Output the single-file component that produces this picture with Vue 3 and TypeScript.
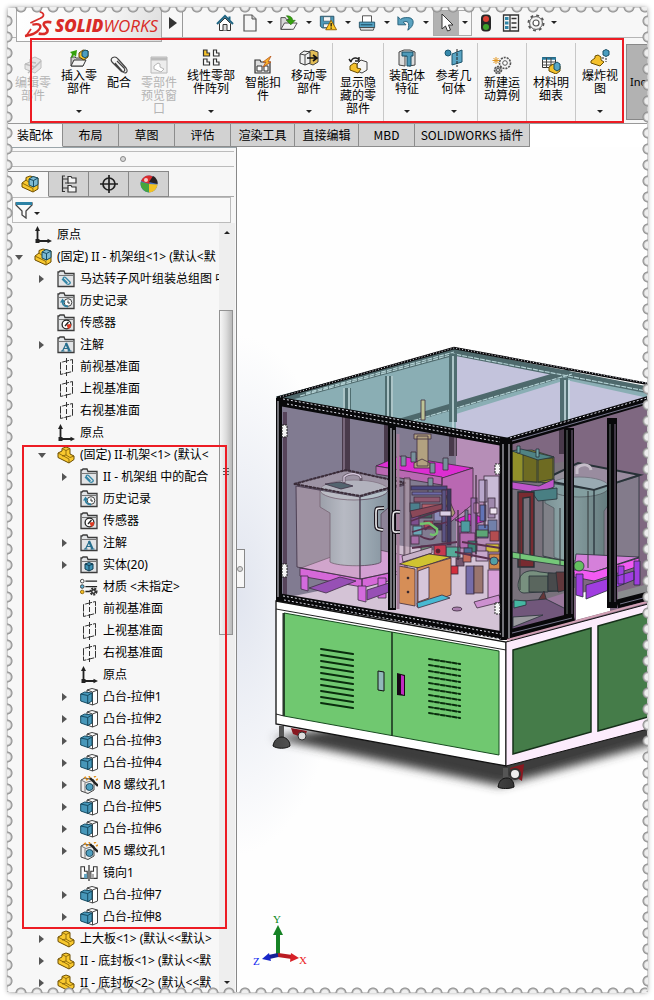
<script setup lang="ts">
interface RibbonItem {
  icon: string
  lines: string[]
  width: 'w-s' | 'w-m' | 'w-n' | 'w-l' | 'w-h' | 'w-x'
  menu?: boolean
  split?: boolean
  disabled?: boolean
}
interface TreeRow {
  level: 0 | 1 | 2
  icon: string
  text: string
  arrow?: 'open' | 'closed'
}

const ribbon: RibbonItem[] = [
  { icon: 'edit', lines: ['编辑零', '部件'], width: 'w-m', disabled: true },
  { icon: 'insert', lines: ['插入零', '部件'], width: 'w-m', menu: true },
  { icon: 'mate', lines: ['配合'], width: 'w-s' },
  { icon: 'preview', lines: ['零部件', '预览窗', '口'], width: 'w-m', disabled: true },
  { icon: 'pattern', lines: ['线性零部', '件阵列'], width: 'w-x', menu: true },
  { icon: 'fastener', lines: ['智能扣', '件'], width: 'w-m' },
  { icon: 'move', lines: ['移动零', '部件'], width: 'w-m', menu: true },
  { icon: 'showhide', lines: ['显示隐', '藏的零', '部件'], width: 'w-h', split: true },
  { icon: 'feature', lines: ['装配体', '特征'], width: 'w-n', menu: true, split: true },
  { icon: 'refgeo', lines: ['参考几', '何体'], width: 'w-n', menu: true },
  { icon: 'motion', lines: ['新建运', '动算例'], width: 'w-l', split: true },
  { icon: 'bom', lines: ['材料明', '细表'], width: 'w-l', split: true },
  { icon: 'explode', lines: ['爆炸视', '图'], width: 'w-l', menu: true, split: true },
]

const quick = [
  { icon: 'home', label: '主页', menu: false },
  { icon: 'new', label: '新建', menu: true },
  { icon: 'open', label: '打开', menu: true },
  { icon: 'save', label: '保存', menu: true },
  { icon: 'print', label: '打印', menu: true },
  { icon: 'undo', label: '撤销', menu: true },
]

const tabs = [
  { text: '装配体', cls: 't-first' },
  { text: '布局', cls: 't-short' },
  { text: '草图', cls: 't-short' },
  { text: '评估', cls: 't-short' },
  { text: '渲染工具', cls: 't-mid' },
  { text: '直接编辑', cls: 't-mid' },
  { text: 'MBD', cls: 't-short' },
  { text: 'SOLIDWORKS 插件', cls: 't-long' },
]

const boss = (n: number): TreeRow => ({ level: 2, icon: 'boss', text: `凸台-拉伸${n}`, arrow: 'closed' })

const tree: TreeRow[] = [
  { level: 0, icon: 'origin', text: '原点' },
  { level: 0, icon: 'assembly', text: '(固定) II - 机架组<1> (默认<默', arrow: 'open' },
  { level: 1, icon: 'f-mate', text: '马达转子风叶组装总组图 中', arrow: 'closed' },
  { level: 1, icon: 'f-history', text: '历史记录' },
  { level: 1, icon: 'f-sensor', text: '传感器' },
  { level: 1, icon: 'f-note', text: '注解', arrow: 'closed' },
  { level: 1, icon: 'plane', text: '前视基准面' },
  { level: 1, icon: 'plane', text: '上视基准面' },
  { level: 1, icon: 'plane', text: '右视基准面' },
  { level: 1, icon: 'origin', text: '原点' },
  { level: 1, icon: 'part', text: '(固定) II-机架<1> (默认<', arrow: 'open' },
  { level: 2, icon: 'f-mate', text: 'II - 机架组 中的配合', arrow: 'closed' },
  { level: 2, icon: 'f-history', text: '历史记录' },
  { level: 2, icon: 'f-sensor', text: '传感器' },
  { level: 2, icon: 'f-note', text: '注解', arrow: 'closed' },
  { level: 2, icon: 'f-solid', text: '实体(20)', arrow: 'closed' },
  { level: 2, icon: 'material', text: '材质 <未指定>' },
  { level: 2, icon: 'plane', text: '前视基准面' },
  { level: 2, icon: 'plane', text: '上视基准面' },
  { level: 2, icon: 'plane', text: '右视基准面' },
  { level: 2, icon: 'origin', text: '原点' },
  boss(1),
  boss(2),
  boss(3),
  boss(4),
  { level: 2, icon: 'hole', text: 'M8 螺纹孔1', arrow: 'closed' },
  boss(5),
  boss(6),
  { level: 2, icon: 'hole', text: 'M5 螺纹孔1', arrow: 'closed' },
  { level: 2, icon: 'mirror', text: '镜向1' },
  boss(7),
  boss(8),
  { level: 1, icon: 'part', text: '上大板<1> (默认<<默认>', arrow: 'closed' },
  { level: 1, icon: 'part', text: 'II - 底封板<1> (默认<<默', arrow: 'closed' },
  { level: 1, icon: 'part', text: 'II - 底封板<2> (默认<<默', arrow: 'closed' },
]

type Block = [number, number, number, number, string]
const machinery: Block[] = [
  [411, 486, 36, 4, '#4b4880'], [412, 492, 32, 3, '#6c6aa8'], [414, 497, 26, 5, '#8f5870'],
  [410, 503, 10, 8, '#4c7f8c'], [422, 504, 20, 6, '#b05f6a'], [411, 513, 8, 12, '#7d4f8e'],
  [420, 512, 12, 6, '#425f5c'], [434, 511, 8, 10, '#8d8db8'], [413, 526, 9, 9, '#6aa7b5'],
  [424, 521, 9, 8, '#a8445a'], [434, 523, 8, 7, '#3d3d50'], [442, 490, 4, 52, '#5a5484'],
  [447, 489, 4, 56, '#3d3960'], [411, 536, 8, 8, '#a76fa9'], [440, 511, 11, 5, '#dccfe5'],
  [484, 476, 15, 56, '#c9bad6'],
  [479, 480, 8, 22, '#b8a7cc'], [480, 505, 6, 16, '#6173b6'], [488, 498, 7, 20, '#9f88ad'],
  [488, 520, 9, 13, '#7180aa'], [465, 510, 3, 15, '#6b7d92'], [471, 498, 6, 41, '#9d6eae'],
  [461, 521, 9, 11, '#4e9ba0'], [478, 525, 10, 13, '#6278b4'], [490, 531, 9, 10, '#b34d50'],
  [460, 533, 15, 15, '#b46bb0'], [476, 530, 12, 7, '#5ca776'], [468, 541, 9, 11, '#3f8378'],
  [486, 544, 13, 8, '#d2ba3a'], [446, 547, 14, 10, '#55ab98'], [434, 545, 12, 11, '#c63a50'],
  [456, 558, 8, 8, '#74576e'], [476, 551, 12, 10, '#c6a7cb'], [489, 554, 11, 15, '#d18849'],
  [466, 566, 8, 28, '#766da9'], [474, 566, 9, 27, '#9a756e'], [488, 570, 12, 30, '#d79fd8'],
  [464, 548, 8, 9, '#4a6c94'], [450, 566, 8, 8, '#d22e3c'], [421, 546, 10, 8, '#6f8b79'],
  [474, 503, 5, 10, '#cf93c4'], [490, 508, 7, 6, '#efe6f2'], [463, 553, 8, 9, '#c36a5c'],
]
const vents = Array.from({ length: 10 }, (_, i) => i * 6)
</script>

<template>
  <div class="page">
    <svg class="sprites" aria-hidden="true">
      <symbol id="home" viewBox="0 0 18 18"><path d="M3.500 9.500v7h11v-7L9 4z" fill="#fff" stroke="#333" /><path d="M7 16.500v-6h4v6" fill="#ddd" stroke="#333" /><path d="M1 10 9 2l8 8M13.500 2.500v4" fill="none" stroke="#1f6482" stroke-width="2" /></symbol>
      <symbol id="new" viewBox="0 0 18 18"><path d="M3 1h8l4 4v12H3z" fill="#f6f6f6" stroke="#555" stroke-width="1.200" /><path d="M11 1v4h4" fill="#ccc" stroke="#555" /></symbol>
      <symbol id="open" viewBox="0 0 20 18"><path d="M1 16V3h5l1 2h5v11z" fill="#d8d8d8" stroke="#444" /><path d="M1 16 5 9h14l-4 7z" fill="#f3f3f3" stroke="#444" /><path d="M7 1c5 0 7 2 7 5h3l-5 5-5-5h3c0-2-1-3-3-5z" fill="#35a10e" stroke="#176000" stroke-width=".6" /></symbol>
      <symbol id="save" viewBox="0 0 20 18"><path d="M1.500 1.500h15v13h-13l-2-2z" fill="#4d99b8" stroke="#224b60" /><path d="M5 2h8v5H5zM5 10h7v4H5z" fill="#f5f5f5" stroke="#224b60" stroke-width=".7" /><path d="m13.500 6 6 10.500h-12z" fill="#ffca28" stroke="#8a5a00" /><path d="M13.500 9v4M13.500 14v1.500" stroke="#111" stroke-width="1.400" /></symbol>
      <symbol id="print" viewBox="0 0 20 18"><path d="M5 8V1h10v7" fill="#fff" stroke="#444" /><path d="M1.500 8h17v6h-17z" fill="#55a3c4" stroke="#1d4d63" /><path d="M2 14h16l-1 3H3z" fill="#ddd" stroke="#444" /><path d="M3 11h13" stroke="#123c50" /></symbol>
      <symbol id="undo" viewBox="0 0 20 18"><path d="M1 2v9h9L7 8c4-2 8 0 5 9 8-5 8-14 0-14-3 0-6 0-8 2z" fill="#5aa2c0" stroke="#1e5a75" /></symbol>
      <symbol id="cursor" viewBox="0 0 18 18"><path d="M4 0v15l3.500-3 2 5 3-1-2-5H15z" fill="#fff" stroke="#333" /></symbol>
      <symbol id="traffic" viewBox="0 0 12 18"><rect x="1" y=".5" width="10" height="17" rx="4" fill="#272727" /><circle cx="6" cy="5" r="3" fill="#db4034" /><circle cx="6" cy="13" r="3" fill="#3fa22c" /></symbol>
      <symbol id="list" viewBox="0 0 18 18"><path d="M1.500 1h15v16h-15zM8 1v16" fill="#f7f7f7" stroke="#333" stroke-width="1.300" /><path d="M3 3h3.500v3H3zM3 7.500h3.500v3H3zM3 12h3.500v3H3z" fill="#2f86a8" /><path d="M9.500 4.500h5M9.500 9h5M9.500 13.500h5" stroke="#333" stroke-width="1.300" /></symbol>
      <symbol id="gear" viewBox="0 0 18 18"><circle cx="9" cy="9" r="7.600" fill="none" stroke="#555" stroke-width="1.800" stroke-dasharray="2.900 3.070" /><circle cx="9" cy="9" r="6.400" fill="#f5f5f5" stroke="#555" /><circle cx="9" cy="9" r="3" fill="#fff" stroke="#555" stroke-width="1.200" /></symbol>

      <symbol id="part" viewBox="0 0 18 18"><path d="m1 7 4-2V2.500L9 1l4 1.500V8l4 2v3.500L12 17 1 11.500z" fill="#f9c92f" stroke="#6b4c00" /><path d="m5 2.500 4 2V9l4 2.500 4-1.500M9 4.500l4-2M1 7l11 6v4M9 9l-4 1" fill="none" stroke="#7b5a06" stroke-width=".8" /></symbol>
      <symbol id="assembly" viewBox="0 0 18 18"><path d="M1 8 5 5V2.500L9 1l8 2v11l-5 3L1 12z" fill="#f9c92f" stroke="#6b4c00" /><path d="M1 8l11 5.500V17M5 5l4 3" fill="none" stroke="#8e6908" /><path d="m8 4 4-2.500L17 3v6.500L12.500 12 8 10z" fill="#7dbad3" stroke="#174c64" /><path d="m8 4 4.500 1.500L17 3M12.500 5.500V12" fill="none" stroke="#174c64" /></symbol>
      <symbol id="origin" viewBox="0 0 18 18"><path d="M3.500 3v12H15" fill="none" stroke="#222" stroke-width="1.800" /><path d="M3.500 0 6 5H1zM18 15l-4.500-2.200v4.400z" fill="#222" /><rect x="1.500" y="13" width="4" height="4" fill="#222" /></symbol>
      <symbol id="plane" viewBox="0 0 18 18"><path d="M3.500 4.500v12l12-3v-12z" fill="none" stroke="#333" stroke-dasharray="7 1" /><path d="M9.500 0v18" stroke="#333" stroke-dasharray="5 2" /></symbol>
      <symbol id="folder" viewBox="0 0 18 18"><path d="M1 16.500V2h1l1-1h4l1 2.500h9v13z" fill="#e2e4e6" stroke="#3c3c3c" stroke-width="1.300" /><path d="M2 5.500h14" stroke="#777" /></symbol>
      <symbol id="f-mate" viewBox="0 0 18 18"><use href="#folder" /><path d="m5 9 5 5c2 1 4-1 3-2L8.500 7.500c-1-1-3 0-2 1.500l4 4" fill="none" stroke="#3587a7" stroke-width="1.300" /></symbol>
      <symbol id="f-history" viewBox="0 0 18 18"><use href="#folder" /><circle cx="11" cy="10.500" r="3.800" fill="#fff" stroke="#444" /><path d="M11 8.500V11h2" fill="none" stroke="#333" /><path d="M11 14.500c-5 0-6-3-5-6" fill="none" stroke="#2c7f9f" stroke-width="1.800" /><path d="m3 10.500 2.500-4 3 4z" fill="#2c7f9f" /></symbol>
      <symbol id="f-sensor" viewBox="0 0 18 18"><use href="#folder" /><circle cx="9.500" cy="10.500" r="4.400" fill="#fff" stroke="#222" stroke-width="1.300" /><path d="M9.500 10.500 14 10v3l-3 2z" fill="#dc3b24" /><path d="m8 12 3.500-4" stroke="#222" stroke-width="1.400" /></symbol>
      <symbol id="f-note" viewBox="0 0 18 18"><use href="#folder" /><path d="m5.500 15 4-8" fill="none" stroke="#286f8e" stroke-width="1.200" /><path d="m9 7 3.500 8" fill="none" stroke="#286f8e" stroke-width="2.200" /><path d="M6.500 12.500H12M4 15h3.500M10.500 15h4" fill="none" stroke="#286f8e" /></symbol>
      <symbol id="f-solid" viewBox="0 0 18 18"><use href="#folder" /><path d="m5 8 4-1.500L13 8v5l-4 2-4-2z" fill="#3f93b5" stroke="#113d52" /><path d="m5 8 4 1.500L13 8M9 9.500V15" fill="none" stroke="#113d52" /></symbol>
      <symbol id="material" viewBox="0 0 20 18"><path d="M6 2.500h13M6 8.500h13M6 14h5" stroke="#222" stroke-width="1.500" /><circle cx="2.500" cy="2.500" r="2" fill="#fff" stroke="#333" /><circle cx="2.500" cy="8.500" r="2" fill="#5fb5dd" stroke="#333" /><circle cx="2.500" cy="14.500" r="2" fill="#f4bd20" stroke="#8b6509" /><circle cx="15" cy="14" r="3" fill="none" stroke="#333" stroke-width="3" stroke-dasharray="2 .9" /><circle cx="15" cy="14" r="2" fill="none" stroke="#333" stroke-width="1.500" /></symbol>
      <symbol id="boss" viewBox="0 0 18 18"><path d="m7 2 5-1.500L17.500 2v13l-5 2L7 15z" fill="#fff" stroke="#444" /><path d="m7 2 5.500 2 5-2M12.500 4v13" fill="none" stroke="#444" /><path d="m.7 6 4-2L12 5v8l-4 2.500L.7 13z" fill="#4797b9" stroke="#164a61" /><path d="m.7 6 7 1.500L12 5M7.700 7.500v8" fill="none" stroke="#164a61" /></symbol>
      <symbol id="hole" viewBox="0 0 18 18"><path d="m1 4 4-2 9 2v10l-6 3.500L1 15z" fill="#efefef" stroke="#444" /><path d="m1 4 5 2.500L14 4M5 6.500v10" fill="none" stroke="#777" /><ellipse cx="9.500" cy="11" rx="3.500" ry="3.500" fill="#4e9fc0" stroke="#234f63" /><path d="m10 2 8 8" stroke="#222" stroke-width="2.400" /><path d="m4 2 2-1M9 0l1 2M14 1l2-1M6 4l2-1M16 4l2-1" stroke="#e3921d" stroke-width="1.600" /></symbol>
      <symbol id="mirror" viewBox="0 0 20 18"><path d="M1 2v13h7V7H5V2zM12 7v8h7V2h-4v5z" fill="#fff" stroke="#333" stroke-width="1.200" /><path d="M4.500 10H8v5H4.500z" fill="#62a5c2" /><path d="M12 10h3.500v5H12z" fill="#aaa" /><path d="M10 0v18" stroke="#111" stroke-width="1.200" /></symbol>
      <symbol id="cfg" viewBox="0 0 18 18"><path d="M5 1H2.500v15.500H5M5 8h4M3 4h6M3 13h6" fill="none" stroke="#333" stroke-width="1.200" /><path d="M8 1.500h3l1 1.500h4v5H8zM8 10.500h3l1 1.500h4v5H8z" fill="#f5f5f5" stroke="#333" stroke-width="1.200" /></symbol>
      <symbol id="target" viewBox="0 0 18 18"><circle cx="9" cy="9" r="6" fill="none" stroke="#222" stroke-width="1.700" /><path d="M9 0v18M0 9h18" stroke="#222" stroke-width="1.700" /></symbol>
      <symbol id="ball" viewBox="0 0 18 18"><circle cx="9" cy="9" r="8.500" fill="#4475c9" /><path d="M9 9 1 6C3 1 9-1 13 2z" fill="#db2d2d" /><path d="M9 9 .7 7c-1 5 3 10 8 10.500z" fill="#46a63b" /><path d="M9 9v8.500c5 0 8-4 8.500-8z" fill="#f2c122" /><path d="m9 7 4-6c4 2 5 6 4.500 8z" fill="#272020" /><circle cx="6" cy="5" r="2" fill="#fff" opacity=".75" /></symbol>

      <symbol id="edit" viewBox="0 0 20 18"><path d="m2 8 5-2V3l5-2 6 3v8l-6 5L2 13z" fill="#e5e5e5" stroke="#bcbcbc" /><path d="m2 8 10 3 6-6M7 6l6 1M5 17 16 7" fill="none" stroke="#bbb" stroke-width="1.500" /></symbol>
      <symbol id="insert" viewBox="0 0 20 18"><path d="M2 17V8h4l1 1h7v8z" fill="#ccc" stroke="#444" /><path d="m2 17 3-6h12l-3 6z" fill="#f4f4f4" stroke="#333" /><path d="m2 8 1-3-2-2 7-2-1 7-2-2-2 3z" fill="#35a10e" /><path d="m10 4 4-3 5 1v6l-4 3-5-3z" fill="#f2c12c" stroke="#604800" /><path d="m13 3 3-2 3 1v5l-3 2-3-2z" fill="#4c9dbf" stroke="#164b61" /></symbol>
      <symbol id="mate" viewBox="0 0 20 18"><path d="m6 7 7 8c3 4 7 1 4-3L9 3C6-1 0 2 3 6l9 9c2 2 5 0 3-3L8 5" fill="none" stroke="#444" stroke-width="1.200" /></symbol>
      <symbol id="preview" viewBox="0 0 20 18"><path d="M2 1h16v16H2z" fill="#ededed" stroke="#b8b8b8" /><path d="M2 3h16" stroke="#bbb" stroke-width="3" /><path d="m5 10 4-3 2 1v3l4 2-3 3-7-3z" fill="#fff" stroke="#b5b5b5" /></symbol>
      <symbol id="pattern" viewBox="0 0 20 18"><path d="M2.500 1v6h6V4H6V1z" fill="#f5c22c" stroke="#333" stroke-width="1.200" /><path d="M12.500 1v6h5.500V4h-2.500V1zM2.500 10v6h6v-3H6v-3zM12.500 10v6h5.500v-3h-2.500v-3z" fill="#fff" stroke="#333" stroke-width="1.200" /></symbol>
      <symbol id="fastener" viewBox="0 0 20 18"><path d="M2 17V4h5l1 2h9v11z" fill="#ddd" stroke="#333" stroke-width="1.200" /><path d="M4 10h5v5H4zM11 10h4v5h-4z" fill="#fff" stroke="#333" /><path d="m18 0-8 6h3l-3 5 8-5h-3z" fill="#f9b62c" stroke="#b6531c" stroke-width=".8" /></symbol>
      <symbol id="move" viewBox="0 0 20 18"><path d="m9 3 4-2 6 2v10l-5 3-5-2z" fill="#e2bd55" stroke="#444" /><path d="m1 5 4-3 6 1v11l-5 2-5-2z" fill="#f0f0f0" stroke="#333" /><path d="m1 5 5 1 5-3M6 6v10" fill="none" stroke="#444" /><path d="M8 9h9M14 6l4 3-4 3" fill="none" stroke="#111" stroke-width="1.600" /></symbol>
      <symbol id="showhide" viewBox="0 0 20 18"><path d="m9 8 4-4 6 2v8l-5 3-5-2z" fill="#f5f5f5" stroke="#444" /><path d="m2 10 4-3 3 1v4l4 1-3 4-8-3z" fill="#f4c12c" stroke="#684c00" /><path d="M3 6c1-5 7-5 8-2M11 1v4H7M3 6 1 3" fill="none" stroke="#222" stroke-width="1.400" /></symbol>
      <symbol id="feature" viewBox="0 0 20 18"><path d="m2 3 5-2h6l5 2v13l-6 1V7H8v10l-6-1z" fill="#ddd" stroke="#444" /><path d="M5 3h11v4h-2v10h-4V7H5z" fill="#4d99b9" stroke="#184d62" /></symbol>
      <symbol id="refgeo" viewBox="0 0 20 18"><circle cx="4" cy="4" r="3" fill="#3689ac" stroke="#1a5771" /><path d="M8 5v11l10-3V1z" fill="#5aa5c4" stroke="#1c536b" /><path d="M13 0v18" stroke="#222" stroke-dasharray="3 1" /></symbol>
      <symbol id="motion" viewBox="0 0 20 18"><circle cx="13" cy="7" r="5.500" fill="#f5f5f5" stroke="#555" stroke-width="1.600" stroke-dasharray="2 1" /><circle cx="13" cy="7" r="2.300" fill="#fff" stroke="#555" /><circle cx="6" cy="14" r="3.500" fill="#aaa" stroke="#555" stroke-width="1.600" stroke-dasharray="2 1" /><circle cx="6" cy="14" r="1.500" fill="#fff" stroke="#555" /><path d="M4 1v7M.5 4.500h7M1.500 2l5 5M6.500 2l-5 5" stroke="#e29722" /></symbol>
      <symbol id="bom" viewBox="0 0 20 18"><path d="M1.500 1.500h13v10h-13z" fill="#fff" stroke="#333" /><path d="M1 2.500h14" stroke="#287ca0" stroke-width="2.500" /><path d="M5.500 2v10M10 2v10M1 6h14M1 9h14" stroke="#444" /><path d="m8 11 4-3 7 2v5l-4 3-7-3z" fill="#f3c12c" stroke="#654b00" /><path d="m13 8 3-2 3 2v5l-3 2-3-2z" fill="#57a6c6" stroke="#184f65" /></symbol>
      <symbol id="explode" viewBox="0 0 20 18"><path d="m1 12 4-3V7l3-1 3 2v3l3 2-4 4-9-3z" fill="#f4c12c" stroke="#6a4e00" /><path d="m13 2 3-1.500L19 2v4l-3 1.500L13 6z" fill="#4a9dbf" stroke="#184f65" /><path d="M16 9v4M14 9h-3" stroke="#222" stroke-dasharray="2 1" /></symbol>
    </svg>

    <main class="sheet">
      <header class="titlebar">
        <div class="brand">
          <svg class="swoosh" viewBox="0 0 90 84" aria-hidden="true"><g fill="none" stroke="#d92b27"><path d="M50 2c14 4 16 13 2 20L22 36" stroke-width="5" /><path d="M28 41c24-5 29 3 20 15-9 13-25 16-42 19" stroke-width="7" /><path d="M24 54 8 77" stroke-width="5" /><path d="M85 34c-15-3-26 0-22 9 3 7 14 9 10 19-3 7-14 8-26 6" stroke-width="8" /></g></svg>
          <span class="brand-name"><b>SOLID</b><i>WORKS</i></span>
        </div>
        <button class="expand" aria-label="展开菜单"><span class="tri-right"></span></button>
        <nav class="quick" aria-label="快速访问">
          <span v-for="q in quick" :key="q.icon" class="q-item" :class="{ 'q-menu': q.menu }">
            <button :aria-label="q.label"><svg class="ico"><use :href="'#' + q.icon" /></svg></button>
            <button v-if="q.menu" class="q-drop" :aria-label="q.label + '菜单'"><span class="tri-down"></span></button>
          </span>
          <span class="select-tool">
            <button class="pressed" aria-label="选择"><svg class="ico"><use href="#cursor" /></svg></button>
            <button class="q-drop" aria-label="选择菜单"><span class="tri-down"></span></button>
          </span>
          <button class="q-plain" aria-label="重建"><svg class="ico"><use href="#traffic" /></svg></button>
          <button class="q-plain" aria-label="文件属性"><svg class="ico"><use href="#list" /></svg></button>
          <button class="q-plain" aria-label="选项"><svg class="ico"><use href="#gear" /></svg></button>
          <button class="q-drop" aria-label="选项菜单"><span class="tri-down"></span></button>
        </nav>
      </header>

      <section class="ribbon" aria-label="装配体工具">
        <button v-for="r in ribbon" :key="r.icon" class="tool" :class="[r.width, { split: r.split, menu: r.menu }]" :disabled="r.disabled">
          <svg class="tool-ico"><use :href="'#' + r.icon" /></svg>
          <span v-for="l in r.lines" :key="l" class="tool-line">{{ l }}</span>
          <span v-if="r.menu" class="tri-down tool-drop"></span>
        </button>
        <button class="instant">Inc</button>
        <div class="mark mark-ribbon"></div>
      </section>

      <nav class="tabs" aria-label="命令管理器">
        <button v-for="(t, i) in tabs" :key="t.text" :class="[t.cls, { active: i === 0 }]">{{ t.text }}</button>
      </nav>

      <div class="work">
        <aside class="panel">
          <div class="grip"><span class="dot"></span></div>
          <div class="panel-tabs">
            <button class="active" aria-label="设计树"><svg class="ico"><use href="#assembly" /></svg></button>
            <button aria-label="配置"><svg class="ico"><use href="#cfg" /></svg></button>
            <button aria-label="尺寸"><svg class="ico"><use href="#target" /></svg></button>
            <button aria-label="外观"><svg class="ico"><use href="#ball" /></svg></button>
          </div>
          <label class="filter">
            <svg class="funnel" viewBox="0 0 18 18"><path d="M1 2h16v2l-6 6v7l-4-3v-4L1 4z" fill="#fafafa" stroke="#444" stroke-width="1.300" /><path d="M1 2.500h16" stroke="#2d83a6" stroke-width="3" /></svg>
            <span class="tri-down"></span>
            <input type="text" aria-label="过滤" />
          </label>
          <div class="tree-area">
            <ul class="tree">
              <li v-for="(n, i) in tree" :key="i" :class="'lv' + n.level">
                <button v-if="n.arrow" class="twist" :aria-label="n.arrow === 'open' ? '折叠' : '展开'"><span :class="n.arrow"></span></button>
                <span v-else class="twist"></span>
                <svg class="node-ico"><use :href="'#' + n.icon" /></svg>
                <span class="node-text">{{ n.text }}</span>
              </li>
            </ul>
            <div class="scroll">
              <span class="tri-up"></span>
              <div class="track"><div class="thumb"><span></span></div></div>
              <span class="tri-down"></span>
            </div>
            <div class="mark mark-tree"></div>
          </div>
        </aside>

        <section class="viewport">
          <button class="handle" aria-label="折叠面板"><span class="dot"></span></button>
          <svg class="scene" viewBox="237 147 410 845" preserveAspectRatio="xMinYMin slice" role="img" aria-label="机架装配体模型">
            <defs>
              <filter id="soft" x="-10%" y="-40%" width="120%" height="180%"><feGaussianBlur stdDeviation="5" /></filter>
              <linearGradient id="tank" x1="0" x2="1"><stop offset="0" stop-color="#7e96a0" /><stop offset=".35" stop-color="#adc3cc" /><stop offset="1" stop-color="#788f99" /></linearGradient>
              <linearGradient id="tank2" x1="0" x2="1"><stop offset="0" stop-color="#6f8f92" /><stop offset=".3" stop-color="#91b0b2" /><stop offset="1" stop-color="#496769" /></linearGradient>
              <linearGradient id="foot" x1="0" x2="1"><stop offset="0" stop-color="#444" /><stop offset=".5" stop-color="#999" /><stop offset="1" stop-color="#333" /></linearGradient>
            </defs>
            <path d="M272 738 500 786 660 742v-30H430z" fill="#3d3d3d" filter="url(#soft)" />
            <path d="M300 726 506 776 660 730v-20H400z" fill="#3d3d3d" />

            <!-- top glass -->
            <path d="M277 398 454 350l194 38v12l-142 40z" fill="#8aaeb4" />
            <path d="M456 354 560 374 456 408zM456 414l110-34 82 18-142 40-50-9z" fill="#c3c3dc" />
            <!-- interior -->
            <path d="M282 402 506 440v196l-224-38z" fill="#817b91" />
            <path d="M456 434 502 442v190l-46-7z" fill="#b68eb7" />
            <path d="M396 545 502 560v76L284 598l98-20z" fill="#d4c3d6" />
            <path d="M512 438 647 400v208l-135 32z" fill="#7f6881" />
            <path d="M512 560 574 556v64l-62 18z" fill="#9a789c" />
            <path d="M576 594 610 587v24l-34 9z" fill="#fff" />
            <path d="M618 592 648 584v14l-30 6z" fill="#8a8c8e" />
            <path d="M512 470 574 460v130l-62 20z" fill="#79727c" />

            <!-- frame members behind the glass -->
            <g fill="none" stroke="#4e696c" stroke-width="7"><path d="M277 400 454 352l194 38M400 422l170-50" /></g>
            <g fill="none" stroke="#b3d1d4" stroke-width="1.200"><path d="M300 396 454 354l192 37M306 393 454 352M402 424l170-50" stroke-dasharray="5 1" /></g>
            <g fill="none" stroke="#4f6d70" stroke-width="8"><path d="M347 388v25M389 376v46M453 354v68M564 378v44" /></g>
            <g fill="none" stroke="#cae1e3" stroke-width="1.500"><path d="M344 388v25M349 388v25M388 376v46M392 376v46M453 356v72M565 380v44M569 380v40" /></g>
            <g fill="none" stroke="#493a4b" stroke-width="8"><path d="M346 414v58M388 424v48M453 434v22M563 424v30" /></g>
            <path d="M344 414v56M455 434v22" stroke="#87758a" stroke-width="1.500" />
            <path d="M285 412v184" stroke="#57445b" stroke-width="4" />

            <!-- left tank -->
            <g stroke="#3d2f43" stroke-width=".8">
              <path d="m301 568 60-22 46 10v16l-45 11z" fill="#d99fdb" />
              <path d="M300 568 362 579v8l-62-11zM362 579l30-7v8l-30 8z" fill="#d568d8" />
              <path d="M301 576h7v15l-7-2zM358 586h8v16l-8-2zM378 578h8v20h-8z" fill="#d36bdd" />
              <path d="M309 588 340 577l16 4-30 12zM367 590l22-7v9l-22 8z" fill="#9750b5" />
              <path d="M320 491h68v17l-7 6v48c-6 5-43 5-51 0v-49l-10-6z" fill="url(#tank)" />
              <ellipse cx="354" cy="490" rx="34" ry="10" fill="#b3c8cf" />
              <path d="m294 484 52-14 60 13-46 13z" fill="#b1a4b1" fill-opacity=".6" stroke-width="1.200" />
              <path d="M296 486 360 497v82l-63-12z" fill="#c5afb8" fill-opacity=".42" />
              <path d="m360 497 45-12v85l-45 9z" fill="#c0a4b6" fill-opacity=".2" />
              <path d="m325 484 15-2 13 4-12 3z" fill="#53646f" />
              <path d="M344 483v-6c5-5 16-4 17 1v3" fill="none" stroke="#685c6b" stroke-width="3" /><path d="M344 482v-5c5-5 16-4 17 1" fill="none" stroke="#d4c6db" stroke-width="1.400" />
            </g>
            <path d="m294 484 52-14 60 13-46 13z" fill="none" stroke="#3a2c38" stroke-width="2" stroke-dasharray="3 1" />

            <!-- press, plates and machinery -->
            <g stroke="#3c2c3d" stroke-width=".8">
              <path d="M376 466 399 456l74 12-30 10z" fill="#dc2ed2" />
              <path d="m376 466 66 11v8l-66-11zM442 478l31-10v36l-31 25z" fill="#b968b2" />
              <path d="m455 520 14-6 24 5-25 7z" fill="#dc26d5" /><path d="m459 526 9 1v22l-9-3z" fill="#a952a8" />
              <path d="M417 436h11v30h-11zM414 434h17v5h-17zM414 463l8-4 8 4v5h-16z" fill="#b2a180" />
              <path d="M421 400h4v20h-4z" fill="#bdc497" />
              <path d="M401 456h5v10h-5zM411 452h5v10h-5zM430 463h5v10h-5zM443 458h5v12h-5zM428 478h5v16h-5z" fill="#78919c" />
              <path d="M404 478h6v80h-6z" fill="#b9a0ae" fill-opacity=".6" />
              <path d="m447 495 8 18-3 4-7-14z" fill="#aa9975" />
              <rect v-for="(b, i) in machinery" :key="i" :x="b[0]" :y="b[1]" :width="b[2]" :height="b[3]" :fill="b[4]" />
              <path d="M476 475v79M485 480v48M458 510v50" fill="none" stroke-width="1.200" />
              <path d="m411 521 30-11M412 532l35-10M425 530c5-7 12-2 11 5-2 7-11 4-16 1M462 542l38 6M455 552l46 9M412 548l45-6" fill="none" stroke="#58304d" stroke-width="1.800" />
              <path d="m410 511 32-7v5l-30 9z" fill="#8b4858" />
              <path d="m420 524 9-1 8 6c1 6-3 7-7 5" fill="none" stroke="#73c36d" stroke-width="2.500" />
              <path d="m402 556 30-9v6l-29 9z" fill="#c8b2c9" />
              <path d="m399 564 30-10 22 3-32 11z" fill="#d0c331" />
              <path d="m399 566 16 3v37l-16-3zM417 568l34-10v37l-34 12z" fill="#d68e57" />
              <path d="m418 571 11-4v31l-11 4z" fill="#d6c6da" />
              <path d="m417 603 25-8 8 3-32 10z" fill="#47b9d2" />
              <path d="m474 602 25-7 2 7-24 6z" fill="#cc90cf" /><ellipse cx="457" cy="609" rx="5" ry="2" fill="#ab7faf" />
              <circle cx="438" cy="551" r="2" fill="#621b28" /><circle cx="494" cy="561" r="4" fill="#4f9fa5" /><circle cx="408" cy="578" r="1" /><circle cx="408" cy="592" r="1" />
            </g>

            <!-- right bay -->
            <g stroke="#273137" stroke-width=".8">
              <path d="M545 488h64v16l-5 7v46c-8 5-42 5-50 0v-49l-9-5z" fill="url(#tank2)" />
              <ellipse cx="579" cy="487" rx="30" ry="10" fill="#7fa4a6" />
              <path d="m543 480 35-17 62 12-46 15z" fill="#b3b0bd" fill-opacity=".5" stroke-width="2" />
              <path d="m543 482 51 8v78l-51-12zM594 490l45-14v82l-45 13z" fill="#8a9698" fill-opacity=".42" />
              <path d="M577 474v-6c5-5 13-4 14 2" fill="none" stroke="#c5bdc9" stroke-width="3" />
              <path d="m576 554 63 3-45 15-20-2z" fill="#d580da" />
              <path d="M574 570h9l11 2 45-14v8l-45 15-20-4z" fill="#f25af2" />
              <path d="M576 574h7v23l-7-2zM586 585l48-14v9l-48 19zM618 566h6v18h-6zM634 561h6v24h-6z" fill="#a03de0" />
              <path d="m512 451 20-1 22 7v26l-42-2z" fill="#91902a" /><path d="m523 455 14-1v28l-14-1zM538 458h15v21l-15 3z" fill="#6e6b22" />
              <path d="m512 451 9-2 33 8-16 3z" fill="#508384" /><path d="M517 446h3v7h-3zM536 449h3v8h-3z" fill="#6fa3a6" />
              <path d="m506 481 33 5 15-7v8l-16 6-31-5z" fill="#be55ca" />
              <path d="m531 491 26-3v11l-19 2z" fill="#497f83" />
              <path d="M518 492h16v75h-16zM523 498v60h7v-61z" fill="#782b31" fill-rule="evenodd" stroke-width="1.400" />
              <path d="m512 552 60 10v5l-60-9z" fill="#75c779" />
              <path d="M519 580c2-9 12-11 21-8l18 2v17l-34 2c-6 0-7-8-5-13z" fill="#78907f" /><path d="M529 576h19v16h-19z" fill="#5a665e" /><path d="M548 573h10v18h-10z" fill="#484a4c" /><path d="M556 572h18v16l-16 4z" fill="#60373b" />
              <path d="m532 610 12-19 5 18z" fill="#653638" /><circle cx="579" cy="566" r="5" fill="#64be60" />
              <path d="m512 602 34-3 28 14-50 17-12-1z" fill="#71577b" /><path d="m514 600 12 1v4l-12 3z" fill="#45b8a3" />
              <path d="m513 617 30-2-30 12z" fill="#9b9b9f" />
            </g>
            <path d="M520 520v70M560 508v57M588 491v77" stroke="#34383a" />

            <!-- black extrusions -->
            <g fill="none" stroke="#08080a">
              <path d="M277 401 506 442" stroke-width="9" /><path d="M506 442 648 400" stroke-width="8" />
              <path d="M277 597 506 636" stroke-width="8" /><path d="M506 635 574 617M617 604l31-8" stroke-width="9" />
              <path d="M279 398v204" stroke-width="6" /><path d="M392 424v186" stroke-width="8" /><path d="M506 440v200" stroke-width="13" />
              <path d="M569 428v192M612 418v190" stroke-width="10" />
              <path d="M277 398 454 348l194 36" stroke-width="2.500" />
            </g>
            <g fill="none" stroke="#dcdce6">
              <path d="M283 399 500 438M287 404l213 38M510 438l137-40M283 596l218 38M284 600l217 39" stroke-dasharray="2 2" />
              <path d="M512 441 648 402M512 633l60-15M620 604l27-7" stroke="#77778c" />
              <path d="M278 401v196M391 428v180M394 430v178M503 444v193M509 444v194" />
              <path d="M567 430v184M610 424v178" stroke="#66706f" /><path d="M572 430v184M615 424v178" stroke="#786781" />
              <path d="M280 397 454 348l192 35" stroke-dasharray="1 2" />
            </g>
            <path d="M398 434v175" stroke="#a37e99" stroke-width="3" />
            <g fill="#f4f4f4" stroke="#222"><path d="M282 425h5v12h-5zM282 564h5v13h-5zM495 464h5v10h-5zM495 603h5v11h-5z" stroke-dasharray="2 1" /></g>
            <g fill="none" stroke="#1d1720" stroke-width="4"><path d="M384 508c-9 0-8 0-8 8v8c0 6 2 5 7 6M400 512c-7-1-7 0-7 7v10c0 4 2 3 7 3" /></g>
            <g fill="none" stroke="#eee" stroke-width="1.600"><path d="M384 508c-9 0-8 0-8 8v8c0 6 2 5 7 6M400 512c-7-1-7 0-7 7v10c0 4 2 3 7 3" /></g>

            <!-- base cabinet -->
            <path d="M276 601 506 642v124l-230-42z" fill="#fff" stroke="#111" stroke-width="1.300" />
            <path d="m506 642 142-38v125l-142 37z" fill="#fcecfc" stroke="#111" />
            <path d="m507 640 140-38" stroke="#d2a0b4" stroke-width="2" />
            <path d="M284 613 499 651v104l-215-39z" fill="#70c870" stroke="#174c20" />
            <path d="M276 609 506 650M283 613v103M276 714l8 2" fill="none" stroke="#222" />
            <path d="M284 613v103M392 632v104" stroke="#1d3521" stroke-width="1.600" />
            <path d="M513 650 591 628v104l-78 22zM598 626l50-14v105l-50 14z" fill="#457c49" stroke="#152f19" stroke-width="1.500" />
            <g stroke="#092d0d" stroke-width="2" stroke-linecap="round">
              <path v-for="v in vents" :key="'a' + v" :d="`M321 ${649 + v}l32 5`" />
              <path v-for="v in vents" :key="'b' + v" :d="`M429 ${659 + v}l31 5`" stroke-dasharray="4 2" />
            </g>
            <path d="m378 671 6 1v19l-6-1z" fill="#91b9b9" stroke="#111" /><path d="m397 673 8 2v21l-8-1z" fill="#170916" /><path d="m401 675 3 1v19l-3-1z" fill="#c12cc1" />
            <path d="M279 726h5v16h-5zM503 768h5v15h-5z" fill="#555" />
            <path d="M273 746c1-7 6-9 9-9s8 3 8 9c-4 3-13 3-17 0zM498 787c1-7 5-9 9-9s7 3 7 9c-4 2-13 2-16 0z" fill="url(#foot)" stroke="#111" />
            <path d="m291 728 16 3-3 7-11-4zM510 768l14-4-2 17-8-5z" fill="#871820" />
            <circle cx="302" cy="736" r="4" fill="#ddd" stroke="#333" /><circle cx="515" cy="774" r="5" fill="#eee" stroke="#333" stroke-width="2" />

            <!-- triad -->
            <path d="M278 955v-20" stroke="#168225" stroke-width="4" /><path d="m278 925 5 10h-10z" fill="#168225" />
            <path d="m278 955 14 2" stroke="#ba1c22" stroke-width="4" /><path d="m299 958-9 4 1-9z" fill="#d82128" />
            <path d="m278 955-9 2" stroke="#152094" stroke-width="4" /><path d="m262 959 7-6 2 8z" fill="#1726c8" />
            <g class="axis"><text x="273" y="923" fill="#07861a">Y</text><text x="299" y="964" fill="#ec1c24">X</text><text x="253" y="965" fill="#0c1ff0">Z</text></g>
          </svg>
        </section>
      </div>
      <i class="edge edge-top"></i><i class="edge edge-bottom"></i><i class="edge edge-left"></i><i class="edge edge-right"></i>
    </main>
  </div>
</template>

<style>
html, body { margin: 0; background: #fff; }
</style>

<style scoped>
* { box-sizing: border-box; }
.page { height: 100vh; padding: 8px 7px 8px 8px; background: #fff; font: 12px/16px "Noto Sans", "Noto Sans CJK SC", sans-serif; color: #000; }
.sprites { position: absolute; width: 0; height: 0; }
button { border: 0; padding: 0; margin: 0; background: none; font: inherit; color: inherit; }
.sheet { position: relative; height: 100%; display: flex; flex-direction: column; background: #f7f7f7; box-shadow: 0 0 5px #888; }
.ico { display: block; width: 18px; height: 18px; }

.titlebar { display: flex; flex: none; height: 30px; border-bottom: 1px solid #b5b5b5; }
.brand { display: flex; flex: none; align-items: center; width: 146px; height: 34px; margin-left: 8px; padding-left: 6px; border: 1px solid #a8a8a8; border-top: 0; background: linear-gradient(110deg, #fff, #f5f5f5 60%, #ddd); }
.swoosh { width: 30px; height: 28px; flex: none; }
.brand-name { margin-left: 2px; padding-top: 2px; font: 17px/20px "Open Sans", sans-serif; color: #d92b27; white-space: nowrap; }
.brand-name b { font-style: italic; font-weight: 800; }
.expand { width: 21px; padding-left: 7px; border-right: 1px solid #999; }
.tri-right { display: block; border-left: 8px solid #333; border-top: 6px solid transparent; border-bottom: 6px solid transparent; }
.tri-down { display: block; width: 0; border-top: 3px solid #222; border-left: 3px solid transparent; border-right: 3px solid transparent; }
.tri-up { display: block; width: 0; border-bottom: 3px solid #222; border-left: 3px solid transparent; border-right: 3px solid transparent; }
.quick { display: flex; align-items: center; margin-left: 33px; }
.q-item { display: flex; align-items: center; width: 25px; }
.q-menu { width: 39px; }
.q-drop { display: flex; align-items: center; justify-content: center; width: 13px; height: 24px; margin-left: 4px; }
.select-tool { display: flex; margin-left: -3px; height: 26px; border: 1px solid #aaa; margin-right: 5px; }
.select-tool .q-drop { margin: 0; width: 12px; }
.pressed { width: 25px; padding-left: 4px; background: #b2b2b2; }
.q-plain { width: 18px; margin-right: 7px; }
.q-plain + .q-drop { margin-left: -5px; }

.ribbon { position: relative; display: flex; flex: none; height: 86px; padding: 5px 0 3px 2px; overflow: hidden; border-bottom: 1px solid #999; }
.tool { display: flex; flex: none; flex-direction: column; align-items: center; height: 78px; padding-top: 13px; }
.tool.menu { padding-top: 6px; }
.tool:disabled { color: #b4b4b4; }
.tool.split { border-left: 1px solid #c8c8c8; }
.w-s { width: 34px; } .w-m { width: 46px; } .w-n { width: 47px; } .w-l { width: 49px; } .w-h { width: 51px; } .w-x { width: 58px; }
.tool-ico { width: 20px; height: 18px; margin-bottom: 2px; flex: none; }
.tool-line { height: 13px; line-height: 13px; white-space: nowrap; }
.tool-drop { margin-top: auto; margin-bottom: 8px; }
.instant { flex: 1; min-width: 20px; margin: 1px 0 0 2px; padding-left: 3px; overflow: hidden; border: 1px solid #888; border-right: 0; background: #b2b2b2; text-align: left; font-size: 11px; }
.mark { position: absolute; border: 2px solid #ed1c24; pointer-events: none; }
.mark-ribbon { left: 22px; right: 23px; top: 0; bottom: 0; }

.tabs { display: flex; flex: none; height: 23px; background: linear-gradient(90deg, #f7f7f7 228px, #fff 228px); }
.tabs button { flex: none; border-right: 1px solid #8c8c8c; border-bottom: 1px solid #8c8c8c; background: #d2d2d2; font-family: "Noto Sans CJK SC", sans-serif; }
.tabs .active { background: #f7f7f7; border-bottom-color: #f7f7f7; }
.t-first { width: 55px; } .t-short { width: 56px; } .t-mid { width: 64px; } .t-long { width: 115px; }

.work { display: flex; flex: 1; min-height: 0; }
.panel { display: flex; flex: none; flex-direction: column; width: 229px; border-right: 1px solid #888; border-top: 1px solid #9aa5aa; }
.grip { display: flex; flex: none; align-items: center; justify-content: center; height: 16px; margin: 3px 2px 4px 4px; border: solid #bbb; border-width: 1px 0; }
.dot { display: block; width: 6px; height: 6px; border: 1px solid #888; border-radius: 50%; background: #d8d8d8; }
.panel-tabs { display: flex; flex: none; height: 26px; margin-right: 2px; border-bottom: 1px solid #aaa; }
.panel-tabs button { display: flex; align-items: center; justify-content: center; width: 40px; height: 26px; border: 1px solid #888; border-left: 0; background: #d2d2d2; }
.panel-tabs .active { width: 41px; background: #f7f7f7; border-bottom-color: #f7f7f7; padding-left: 4px; }
.filter { display: flex; flex: none; align-items: center; height: 26px; margin: 0 5px 0 4px; padding-left: 2px; border: 1px solid #bbb; background: #f9f9f9; }
.funnel { width: 18px; height: 18px; }
.filter .tri-down { margin: 6px 0 0 1px; }
.filter input { flex: 1; min-width: 0; height: 20px; border: 0; outline: 0; background: transparent; font: inherit; }
.tree-area { position: relative; display: grid; grid-template-columns: 1fr 16px; flex: 1; min-height: 0; padding-right: 1px; }
.tree { margin: 0; padding: 1px 0 0; overflow: hidden; list-style: none; }
.tree li { display: flex; align-items: center; height: 22px; }
.lv0 { padding-left: 3px; } .lv1 { padding-left: 26px; } .lv2 { padding-left: 49px; }
.twist { display: flex; align-items: center; justify-content: center; flex: none; width: 15px; height: 18px; margin-right: 8px; }
.closed { border-left: 5px solid #555; border-top: 4px solid transparent; border-bottom: 4px solid transparent; }
.open { border-top: 5px solid #555; border-left: 4px solid transparent; border-right: 4px solid transparent; }
.node-ico { flex: none; width: 18px; height: 18px; }
.node-text { margin-left: 5px; min-width: 0; overflow: hidden; white-space: nowrap; }
.scroll { display: flex; flex-direction: column; align-items: center; padding: 8px 0; background: #eee; min-height: 0; }
.track { flex: 1; width: 100%; padding-top: 76px; min-height: 0; }
.thumb { display: flex; align-items: center; justify-content: center; width: 14px; height: 325px; border: 1px solid #929292; background: linear-gradient(90deg, #f6f6f6, #ddd 50%, #b8b8b8); }
.thumb span { width: 6px; height: 9px; background: repeating-linear-gradient(#555 0 1px, transparent 1px 3px); }
.mark-tree { left: 14px; right: 9px; top: 222px; height: 484px; }

.viewport { position: relative; flex: 1; min-width: 0; overflow: hidden; background: radial-gradient(ellipse 110px 260px at 0 53%, #e1e5ef, #fefefe); }
.scene { display: block; width: 100%; height: 100%; }
.handle { position: absolute; left: 0; top: 402px; width: 8px; height: 39px; border: 1px solid #888; border-left: 0; background: #f7f7f7; }
.axis { font: 11px "Liberation Serif", serif; }

.edge { position: absolute; pointer-events: none; }
.edge-left, .edge-right { top: 5px; bottom: 0; width: 6px; background-size: 6px 16px; }
.edge-top, .edge-bottom { left: 5px; right: 0; height: 6px; background-size: 16px 6px; }
.edge-left { left: -1px; background-image: radial-gradient(circle at 0 8px, #eee 3px, #8f8f8f 5px, transparent 6px); }
.edge-right { right: -1px; background-image: radial-gradient(circle at 6px 8px, #eee 3px, #8f8f8f 5px, transparent 6px); }
.edge-top { top: -1px; background-image: radial-gradient(circle at 8px 0, #eee 3px, #8f8f8f 5px, transparent 6px); }
.edge-bottom { bottom: -1px; background-image: radial-gradient(circle at 8px 6px, #eee 3px, #8f8f8f 5px, transparent 6px); }
</style>
